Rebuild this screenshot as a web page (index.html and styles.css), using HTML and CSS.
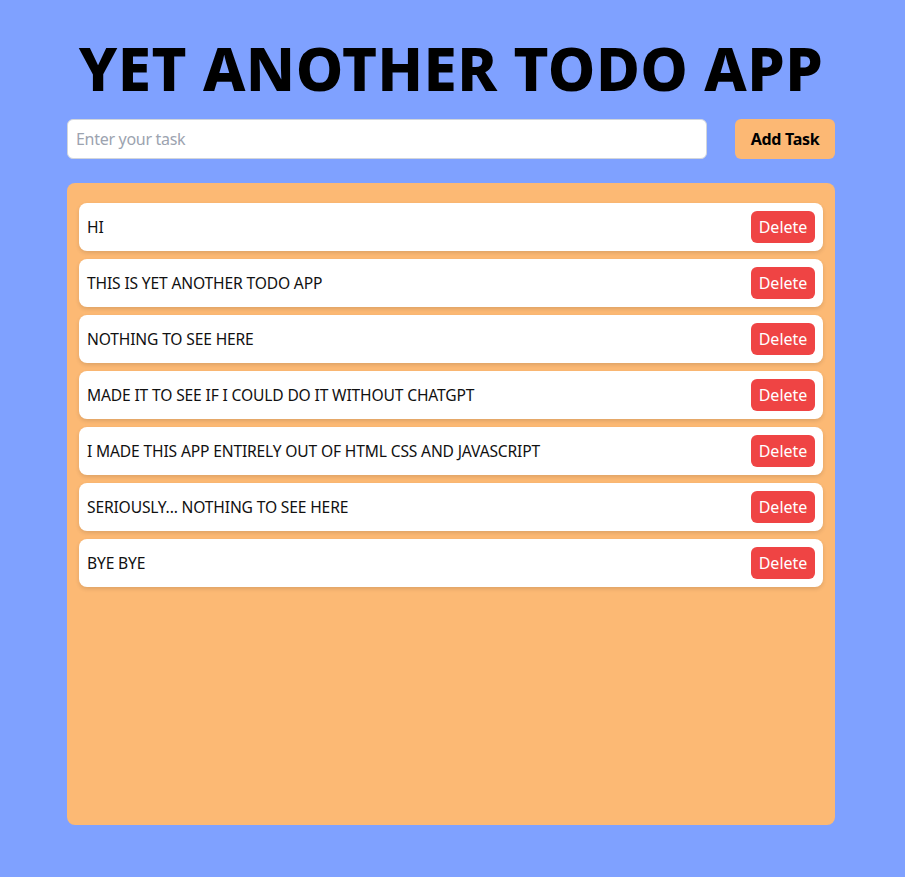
FILE: index.html
```html
<!DOCTYPE html>
<html lang="en">
<head>
<meta charset="utf-8">
<title>Yet Another Todo App</title>
<link rel="stylesheet" href="styles.css">
</head>
<body>
<main class="app">
  <h1 class="title">YET ANOTHER TODO APP</h1>
  <form class="entry">
    <input class="entry-input" type="text" placeholder="Enter your task">
    <button class="entry-btn" type="button">Add Task</button>
  </form>
  <section class="board">
    <ul class="list">
      <li class="item"><span class="item-text">HI</span><button class="del" type="button">Delete</button></li>
      <li class="item"><span class="item-text">THIS IS YET ANOTHER TODO APP</span><button class="del" type="button">Delete</button></li>
      <li class="item"><span class="item-text">NOTHING TO SEE HERE</span><button class="del" type="button">Delete</button></li>
      <li class="item"><span class="item-text">MADE IT TO SEE IF I COULD DO IT WITHOUT CHATGPT</span><button class="del" type="button">Delete</button></li>
      <li class="item"><span class="item-text">I MADE THIS APP ENTIRELY OUT OF HTML CSS AND JAVASCRIPT</span><button class="del" type="button">Delete</button></li>
      <li class="item"><span class="item-text">SERIOUSLY... NOTHING TO SEE HERE</span><button class="del" type="button">Delete</button></li>
      <li class="item"><span class="item-text">BYE BYE</span><button class="del" type="button">Delete</button></li>
    </ul>
  </section>
</main>
</body>
</html>
```
FILE: styles.css
```css
* { box-sizing: border-box; }
html, body { margin: 0; padding: 0; }
body {
  background: #7fa1ff;
  font-family: "Noto Sans", "Open Sans", sans-serif;
  color: #111;
  padding-right: 3px;
}
.app {
  width: 768px;
  margin: 0 auto;
  padding-top: 30px;
}
.title {
  margin: 0 0 2px;
  text-align: center;
  font-size: 60px;
  line-height: 76px;
  font-weight: 800;
  letter-spacing: 0.4px;
  color: #000;
}
.entry {
  display: flex;
  gap: 28px;
  margin-top: 13px;
}
.entry-input {
  flex: 1;
  height: 40px;
  border: 1px solid #d1d5db;
  border-radius: 6px;
  padding: 0 8px;
  font: inherit;
  font-size: 16px;
  letter-spacing: -0.3px;
  background: #fff;
  outline: none;
}
.entry-input::placeholder { color: #9ca3af; }
.entry-btn {
  width: 100px;
  height: 40px;
  border: 0;
  border-radius: 6px;
  background: #fcb874;
  font: inherit;
  font-size: 16px;
  font-weight: 700;
  letter-spacing: -0.3px;
  color: #000;
}
.board {
  margin-top: 24px;
  height: 642px;
  background: #fcb974;
  border-radius: 8px;
  padding: 12px;
}
.list {
  list-style: none;
  margin: 0;
  padding: 0;
}
.item {
  display: flex;
  align-items: center;
  justify-content: space-between;
  height: 48px;
  margin-top: 8px;
  padding: 0 8px;
  background: #fff;
  border-radius: 8px;
  box-shadow: 0 2px 4px rgba(0,0,0,0.12);
  font-size: 16px;
}
.item-text {
  color: #111;
  font-size: 15.6px;
  letter-spacing: -0.15px;
}
.del {
  height: 32px;
  width: 64px;
  border: 0;
  border-radius: 6px;
  background: #ef4444;
  color: #fff;
  font: inherit;
  font-size: 16px;
  padding: 0;
}
```
